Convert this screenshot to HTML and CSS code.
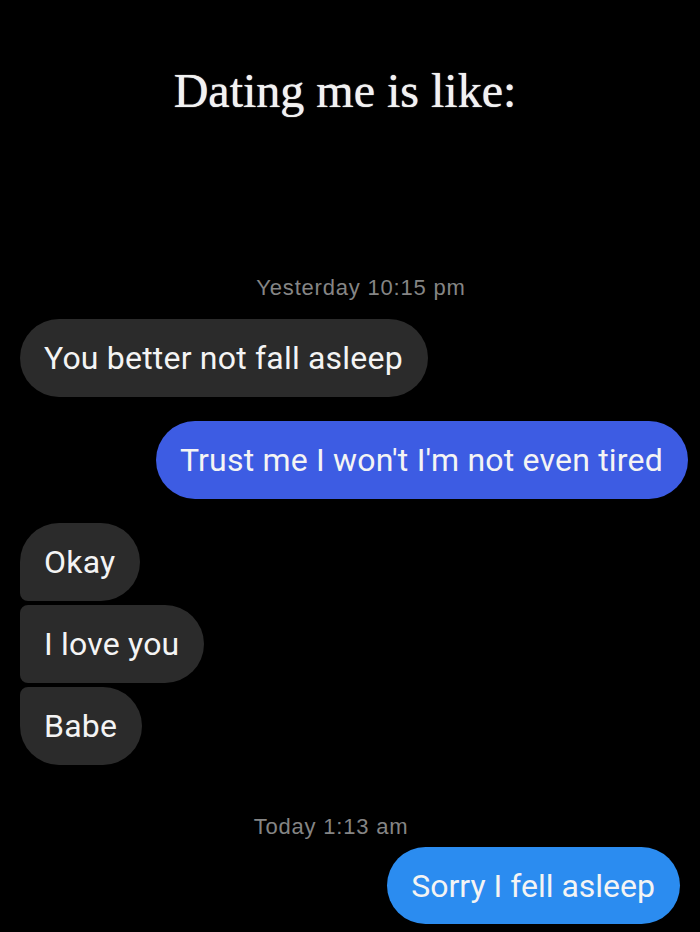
FILE: index.html
```html
<!DOCTYPE html>
<html>
<head>
<meta charset="utf-8">
<link rel="stylesheet" href="styles.css">
</head>
<body>
<div class="page">
  <h1 class="title">Dating me is like:</h1>
  <div class="stamp stamp-first">Yesterday 10:15 pm</div>
  <div class="row in"><div class="bubble gray">You better not fall asleep</div></div>
  <div class="row out out-first"><div class="bubble blue">Trust me I won't I'm not even tired</div></div>
  <div class="group">
    <div class="row in"><div class="bubble gray g-top">Okay</div></div>
    <div class="row in"><div class="bubble gray g-mid">I love you</div></div>
    <div class="row in"><div class="bubble gray g-bot">Babe</div></div>
  </div>
  <div class="stamp stamp-second">Today 1:13 am</div>
  <div class="row out out-last"><div class="bubble sky">Sorry I fell asleep</div></div>
</div>
</body>
</html>
```
FILE: styles.css
```css
html, body {
  margin: 0;
  padding: 0;
  background: #000;
}
.page {
  width: 700px;
  height: 932px;
  overflow: hidden;
  display: flex;
  flex-direction: column;
  font-family: Roboto, "Liberation Sans", sans-serif;
}
.title {
  margin: 67px 0 0 -10px;
  font-family: "Liberation Serif", serif;
  font-weight: normal;
  font-size: 48px;
  line-height: 48px;
  color: #f2f2f2;
  text-align: center;
  text-shadow: 0 0 1px #fff;
}
.stamp {
  text-align: center;
  color: #858585;
  font-family: "Liberation Sans", Arial, sans-serif;
  font-size: 22px;
  letter-spacing: 0.8px;
  line-height: 24px;
}
.stamp-first { margin-top: 161px; margin-left: 22px; }
.stamp-second { margin-top: 50px; margin-left: -38px; }
.row {
  display: flex;
}
.row.in {
  justify-content: flex-start;
  padding-left: 20px;
}
.row.out {
  justify-content: flex-end;
}
.stamp-first + .row { margin-top: 19px; }
.out-first { margin-top: 24px; padding-right: 12px; }
.out-last { margin-top: 8px; padding-right: 20px; }
.group {
  margin-top: 24px;
  display: flex;
  flex-direction: column;
  gap: 4px;
}
.bubble {
  height: 78px;
  box-sizing: border-box;
  padding: 0 25px 0 24px;
  display: flex;
  align-items: center;
  border-radius: 39px;
  font-size: 32px;
  color: #f4f4f4;
  white-space: nowrap;
  letter-spacing: 0.2px;
}
.gray { background: #2b2b2b; }
.blue { background: #3d5ce3; }
.sky { background: #2b8cf0; height: 77px; letter-spacing: 0; }
.g-top { border-radius: 39px 39px 39px 8px; }
.g-mid { border-radius: 8px 39px 39px 8px; }
.g-bot { border-radius: 8px 39px 39px 39px; }
```
